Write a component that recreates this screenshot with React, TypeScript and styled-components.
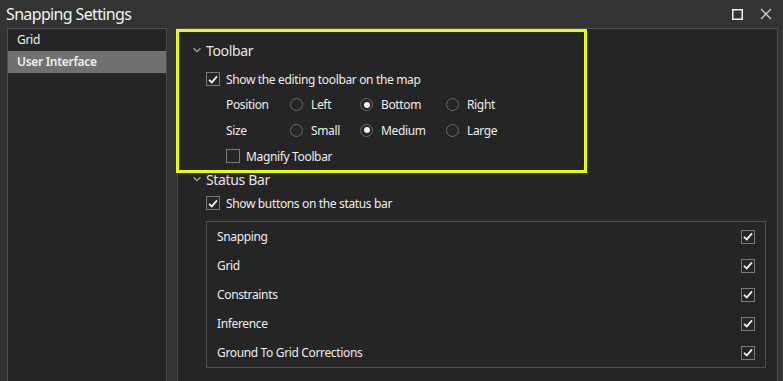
import React from "react";
import styled, { createGlobalStyle } from "styled-components";

const Global = createGlobalStyle`
  html, body { margin: 0; padding: 0; background: #333333; overflow: hidden; }
  * { box-sizing: border-box; }
`;

const FONT = `"Noto Sans", "Open Sans", sans-serif`;

const Window = styled.div`
  width: 783px;
  height: 381px;
  background: #333333;
  font-family: ${FONT};
  color: #ececec;
  display: flex;
  flex-direction: column;
  position: relative;
  overflow: hidden;
`;

const TitleBar = styled.div`
  height: 28px;
  display: flex;
  align-items: center;
  padding: 0 5px 0 6px;
  flex: none;
`;

const Title = styled.div`
  font-size: 16px;
  color: #f2f2f2;
  flex: 1;
  line-height: 28px;
  letter-spacing: -0.65px;
`;

const WinButton = styled.div`
  width: 24px;
  height: 24px;
  display: flex;
  align-items: center;
  justify-content: center;
  margin-left: 5px;
`;

const Body = styled.div`
  flex: 1;
  display: flex;
  padding: 0 5px 0 7px;
  gap: 10px;
  min-height: 0;
`;

const NavPanel = styled.div`
  width: 160px;
  height: 400px;
  background: #252525;
  border: 1px solid #4e4e4e;
  display: flex;
  flex-direction: column;
  flex: none;
`;

const NavItem = styled.div<{ $selected?: boolean }>`
  height: 22px;
  line-height: 22px;
  padding-left: 9px;
  font-size: 12px;
  letter-spacing: -0.3px;
  font-weight: ${(p) => (p.$selected ? 600 : 400)};
  background: ${(p) => (p.$selected ? "#707070" : "transparent")};
  color: #f0f0f0;
`;

const ContentPanel = styled.div`
  width: 601px;
  height: 400px;
  background: #252525;
  border: 1px solid #4e4e4e;
  padding: 9px 10px 0 14px;
  display: flex;
  flex-direction: column;
  flex: none;
`;

const Heading = styled.div<{ $h: number }>`
  height: ${(p) => p.$h}px;
  display: flex;
  align-items: center;
  font-size: 14px;
  letter-spacing: -0.35px;
  color: #e6e6e6;
  gap: 4px;
`;

const Row = styled.div<{ $h: number; $mt?: number; $indent?: number }>`
  height: ${(p) => p.$h}px;
  margin-top: ${(p) => p.$mt ?? 0}px;
  padding-left: ${(p) => p.$indent ?? 0}px;
  display: flex;
  align-items: center;
  font-size: 12px;
  letter-spacing: -0.35px;
  color: #ededed;
`;

const CheckLabel = styled.label`
  display: flex;
  align-items: center;
  gap: 6px;
`;

const Box = styled.span`
  width: 14px;
  height: 14px;
  border: 1px solid #7a7a7a;
  background: #262626;
  display: inline-flex;
  align-items: center;
  justify-content: center;
  flex: none;
`;

const OptLabel = styled.span`
  width: 64px;
`;

const Option = styled.span<{ $w: number }>`
  width: ${(p) => p.$w}px;
  display: flex;
  align-items: center;
  gap: 8px;
`;

const Radio = styled.span<{ $on?: boolean }>`
  width: 13px;
  height: 13px;
  border-radius: 50%;
  border: 1px solid #6c6c6c;
  background: #262626;
  display: inline-flex;
  align-items: center;
  justify-content: center;
  flex: none;
  &::after {
    content: "";
    width: 6px;
    height: 6px;
    border-radius: 50%;
    background: ${(p) => (p.$on ? "#f2f2f2" : "transparent")};
  }
`;

const List = styled.div`
  margin-top: 5px;
  width: 560px;
  border: 1px solid #505050;
  margin-left: 14px;
  display: flex;
  flex-direction: column;
`;

const ListRow = styled.div`
  height: 29px;
  display: flex;
  align-items: center;
  justify-content: space-between;
  padding: 0 10px 0 10px;
  font-size: 12px;
  letter-spacing: -0.35px;
  color: #ededed;
`;

const Highlight = styled.div`
  position: absolute;
  left: 176px;
  top: 29px;
  width: 411px;
  height: 144px;
  border: 3px solid #e8ff00;
  pointer-events: none;
`;

const Check = () => (
  <svg width="10" height="9" viewBox="0 0 10 9">
    <path d="M1 4.8 L3.8 7.4 L9 1.4" fill="none" stroke="#f2f2f2" strokeWidth="1.8" />
  </svg>
);

const Chevron = () => (
  <svg width="10" height="6" viewBox="0 0 10 6">
    <path d="M1.5 1.2 L5 4.5 L8.5 1.2" fill="none" stroke="#9a9a9a" strokeWidth="1.4" />
  </svg>
);

const CheckBox = ({ on }: { on?: boolean }) => <Box>{on ? <Check /> : null}</Box>;

const items = ["Snapping", "Grid", "Constraints", "Inference", "Ground To Grid Corrections"];

export default function App() {
  return (
    <Window>
      <Global />
      <TitleBar>
        <Title>Snapping Settings</Title>
        <WinButton>
          <svg width="11" height="11" viewBox="0 0 11 11">
            <rect x="0.75" y="0.75" width="9.5" height="9.5" fill="none" stroke="#f0f0f0" strokeWidth="1.5" />
          </svg>
        </WinButton>
        <WinButton>
          <svg width="12" height="12" viewBox="0 0 12 12">
            <path d="M1 1 L11 11 M11 1 L1 11" stroke="#cfcfcf" strokeWidth="1.3" />
          </svg>
        </WinButton>
      </TitleBar>
      <Body>
        <NavPanel>
          <NavItem>Grid</NavItem>
          <NavItem $selected>User Interface</NavItem>
        </NavPanel>
        <ContentPanel>
          <Heading $h={24}>
            <Chevron />
            Toolbar
          </Heading>
          <Row $h={26} $mt={4} $indent={14}>
            <CheckLabel>
              <CheckBox on />
              Show the editing toolbar on the map
            </CheckLabel>
          </Row>
          <Row $h={25} $indent={34}>
            <OptLabel>Position</OptLabel>
            <Option $w={70}><Radio />Left</Option>
            <Option $w={86}><Radio $on />Bottom</Option>
            <Option $w={70}><Radio />Right</Option>
          </Row>
          <Row $h={26} $indent={34}>
            <OptLabel>Size</OptLabel>
            <Option $w={70}><Radio />Small</Option>
            <Option $w={86}><Radio $on />Medium</Option>
            <Option $w={70}><Radio />Large</Option>
          </Row>
          <Row $h={26} $indent={34}>
            <CheckLabel>
              <CheckBox />
              Magnify Toolbar
            </CheckLabel>
          </Row>
          <Heading $h={20}>
            <Chevron />
            Status Bar
          </Heading>
          <Row $h={26} $mt={1} $indent={14}>
            <CheckLabel>
              <CheckBox on />
              Show buttons on the status bar
            </CheckLabel>
          </Row>
          <List>
            {items.map((t) => (
              <ListRow key={t}>
                <span>{t}</span>
                <CheckBox on />
              </ListRow>
            ))}
          </List>
        </ContentPanel>
      </Body>
      <Highlight />
    </Window>
  );
}
